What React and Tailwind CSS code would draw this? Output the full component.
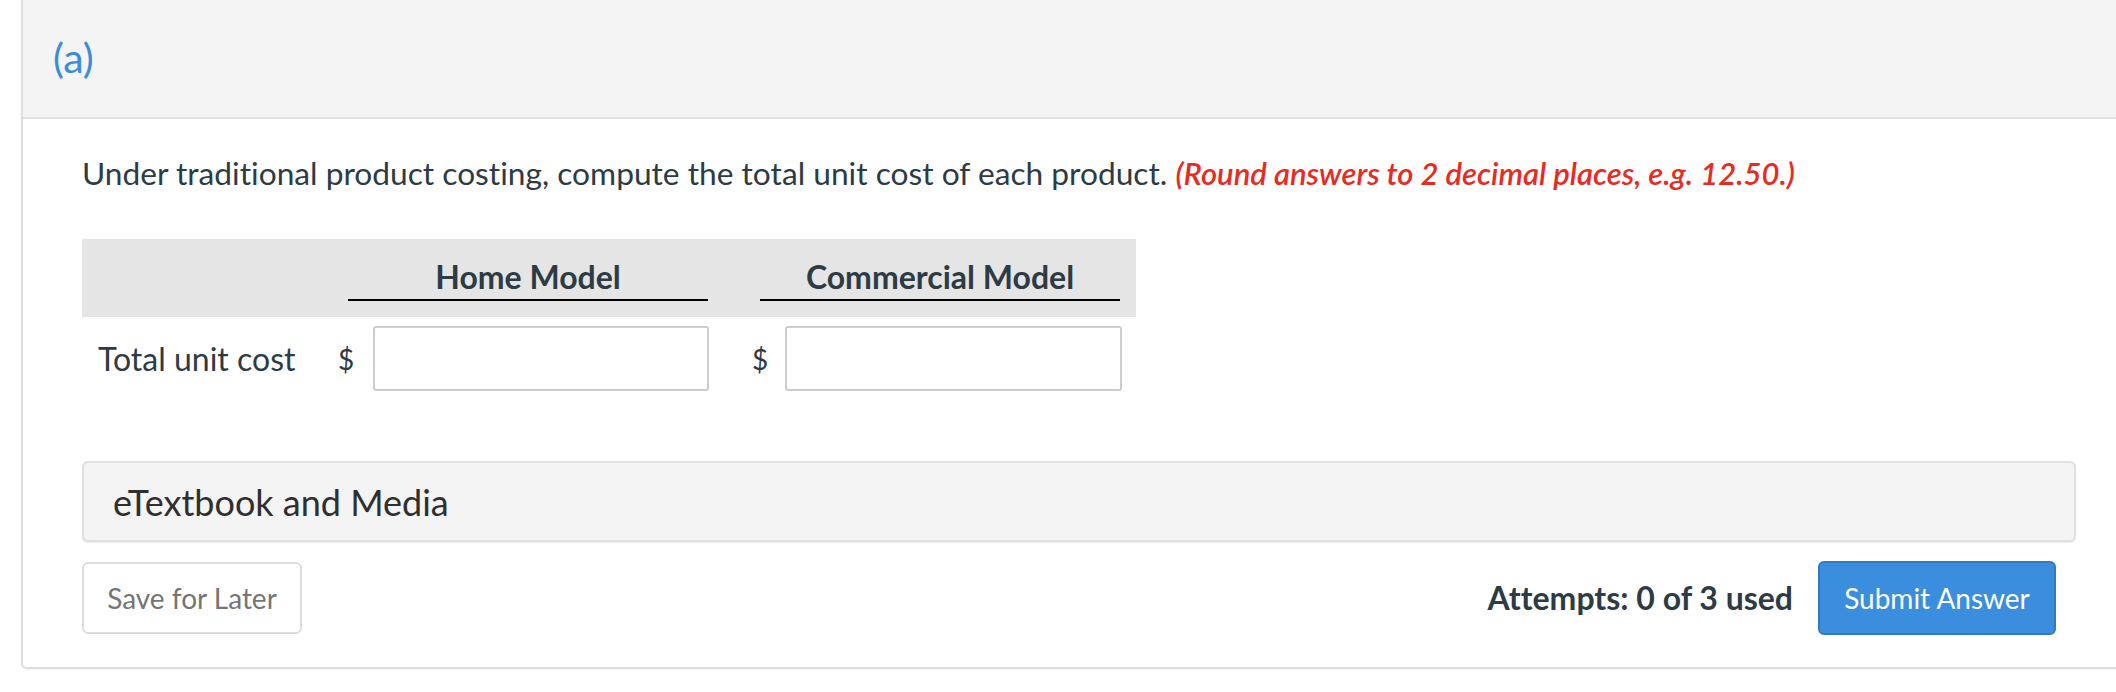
import React from "react";

export default function App() {
  return (
    <div
      className="w-[2116px] h-[692px] overflow-hidden bg-white text-[#2d3b45] [font-variant-ligatures:none]"
      style={{ fontFamily: "Lato, 'Open Sans', sans-serif" }}
    >
      <div className="ml-[21px] w-[2114px] border-l-2 border-b-2 border-[#dedede] rounded-bl-[6px] shadow-[0_1px_2px_rgba(0,0,0,0.06)]">
        {/* header */}
        <div className="h-[119px] bg-[#f4f4f4] border-b-2 border-[#e2e2e2] flex items-center pl-[30px]">
          <span className="text-[41px] leading-none text-[#3a8ddd] -mt-[3px]">(a)</span>
        </div>

        <div className="px-[59px] pb-[32px]">
          {/* question */}
          <p className="mt-[32px] text-[31.7px] leading-[45px] whitespace-nowrap">
            Under traditional product costing, compute the total unit cost of each product.{" "}
            <span className="text-[#e72b1f] italic font-semibold text-[31px]">
              (Round answers to 2 decimal places, e.g. 12.50.)
            </span>
          </p>

          {/* table */}
          <div className="mt-[43px] w-[1054px]">
            <div className="h-[78px] bg-[#e5e5e5] flex items-end pb-[16px]">
              <div className="w-[266px]" />
              <div className="w-[360px] border-b-2 border-black text-center font-bold text-[32px] leading-[30px] pb-[7px]">
                Home Model
              </div>
              <div className="w-[52px]" />
              <div className="w-[360px] border-b-2 border-black text-center font-bold text-[32px] leading-[30px] pb-[7px]">
                Commercial Model
              </div>
            </div>
            <div className="mt-[9px] flex items-center">
              <div className="w-[256px] pl-[16px] text-[32px] leading-none whitespace-nowrap">Total unit cost</div>
              <div className="w-[17px] text-[28px] leading-none">$</div>
              <input
                type="text"
                className="ml-[18px] w-[336px] h-[65px] border-2 border-[#cdcdcd] rounded-[3px] bg-white outline-none"
              />
              <div className="ml-[43px] w-[15px] text-[28px] leading-none">$</div>
              <input
                type="text"
                className="ml-[18px] w-[337px] h-[65px] border-2 border-[#cdcdcd] rounded-[3px] bg-white outline-none"
              />
            </div>
          </div>

          {/* eTextbook */}
          <div className="mt-[70px] h-[81px] bg-[#f4f4f4] border-2 border-[#e0e0e0] rounded-[6px] flex items-center pl-[29px] shadow-[0_1px_1px_rgba(0,0,0,0.08)]">
            <span className="text-[36px] leading-none text-[#2f2f2f]">eTextbook and Media</span>
          </div>

          {/* footer */}
          <div className="mt-[19px] flex items-center justify-between pr-[20px]">
            <button className="w-[220px] h-[72px] border-2 border-[#dddddd] rounded-[6px] bg-white text-[28px] text-[#757575]">
              Save for Later
            </button>
            <div className="flex items-center">
              <span className="font-bold text-[32px] leading-none whitespace-nowrap">Attempts: 0 of 3 used</span>
              <button className="ml-[25px] w-[238px] h-[74px] bg-[#3b8ddd] border-2 border-[#3279c2] rounded-[6px] text-white text-[28px]">
                Submit Answer
              </button>
            </div>
          </div>
        </div>
      </div>
    </div>
  );
}
